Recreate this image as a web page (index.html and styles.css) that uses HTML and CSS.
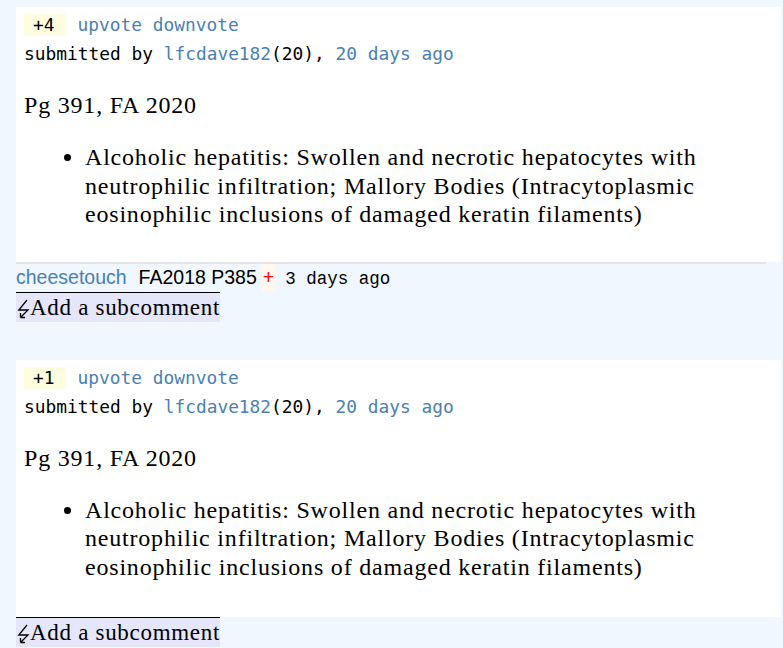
FILE: index.html
```html
<!DOCTYPE html>
<html>
<head>
<meta charset="utf-8">
<link rel="stylesheet" href="styles.css">
</head>
<body>
<div class="page">
  <div class="post">
    <div class="card">
      <div class="votes"><span class="score">+4</span><a class="link">upvote</a> <a class="link">downvote</a></div>
      <div class="meta">submitted by <a class="link">lfcdave182</a>(20), <a class="link">20 days ago</a></div>
      <p class="ref">Pg 391, FA 2020</p>
      <ul class="points">
        <li>Alcoholic hepatitis: Swollen and necrotic hepatocytes with neutrophilic infiltration; Mallory Bodies (Intracytoplasmic eosinophilic inclusions of damaged keratin filaments)</li>
      </ul>
    </div>
    <div class="comments">
      <div class="comment"><a class="user">cheesetouch</a><span class="ctext">FA2018 P385</span><span class="plus">+</span><span class="ago">3 days ago</span></div>
    </div>
    <div class="add"><svg class="bolt" width="13" height="29" viewBox="0 0 13 29"><path d="M10 7 L1.8 17 L11 17 L3.5 24.5 M3.5 24.5 L3.5 20 M3.5 24.5 L8 24.5" fill="none" stroke="#000" stroke-width="1.3"/></svg><span>Add a subcomment</span></div>
  </div>
  <div class="post">
    <div class="card card-tall">
      <div class="votes"><span class="score">+1</span><a class="link">upvote</a> <a class="link">downvote</a></div>
      <div class="meta">submitted by <a class="link">lfcdave182</a>(20), <a class="link">20 days ago</a></div>
      <p class="ref">Pg 391, FA 2020</p>
      <ul class="points">
        <li>Alcoholic hepatitis: Swollen and necrotic hepatocytes with neutrophilic infiltration; Mallory Bodies (Intracytoplasmic eosinophilic inclusions of damaged keratin filaments)</li>
      </ul>
    </div>
    <div class="add add-top"><svg class="bolt" width="13" height="29" viewBox="0 0 13 29"><path d="M10 7 L1.8 17 L11 17 L3.5 24.5 M3.5 24.5 L3.5 20 M3.5 24.5 L8 24.5" fill="none" stroke="#000" stroke-width="1.3"/></svg><span>Add a subcomment</span></div>
  </div>
</div>
</body>
</html>
```

FILE: styles.css
```css
html, body {
  margin: 0;
  padding: 0;
  background: #f0f7ff;
}
.page {
  padding: 7px 2px 0 16px;
}
.post {
  margin-bottom: 38px;
}
.post:last-child {
  margin-bottom: 0;
}
.card {
  background: #ffffff;
  padding: 7px 8px 33px 8px;
}
.card-tall {
  padding-bottom: 36px;
}
.votes, .meta {
  font-family: "DejaVu Sans Mono", monospace;
  font-size: 17.85px;
  line-height: 22px;
  color: #000;
}
.meta {
  margin-top: 7px;
}
.score {
  display: inline-block;
  background: #fffde0;
  padding: 0 11px 0 9px;
  margin-right: 12px;
}
.link {
  color: #4a80b4;
  text-decoration: none;
}
.ref {
  font-family: "Liberation Serif", serif;
  font-size: 24px;
  letter-spacing: 0.8px;
  line-height: 28px;
  margin: 26px 0 0 0;
}
.points {
  font-family: "Liberation Serif", serif;
  font-size: 24px;
  letter-spacing: 0.8px;
  line-height: 28.5px;
  margin: 24px 0 0 0;
  padding-left: 61px;
}
.comments {
  border-top: 2px solid #e4e4e4;
  margin-right: 15px;
}
.comment {
  font-family: "Liberation Sans", sans-serif;
  font-size: 19.5px;
  line-height: 27px;
  height: 27px;
  display: flex;
  align-items: baseline;
}
.user {
  color: #4a80b4;
  margin-right: 12px;
}
.plus {
  color: #ff0000;
  background: #fff8ec;
  margin-left: 5px;
  padding: 0 1px;
}
.ago {
  font-family: "Liberation Mono", monospace;
  font-size: 17.5px;
  margin-left: 10px;
}
.add {
  display: flex;
  width: fit-content;
  height: 29px;
  font-family: "Liberation Serif", serif;
  font-size: 23px;
  letter-spacing: 0.7px;
  line-height: 29px;
  background: #e6e6fa;
  border-top: 1px solid #000;
  margin-top: 1px;
}
.bolt {
  display: block;
  margin-left: 1px;
  flex: none;
}
.add-top {
  margin-top: 0;
}
```
